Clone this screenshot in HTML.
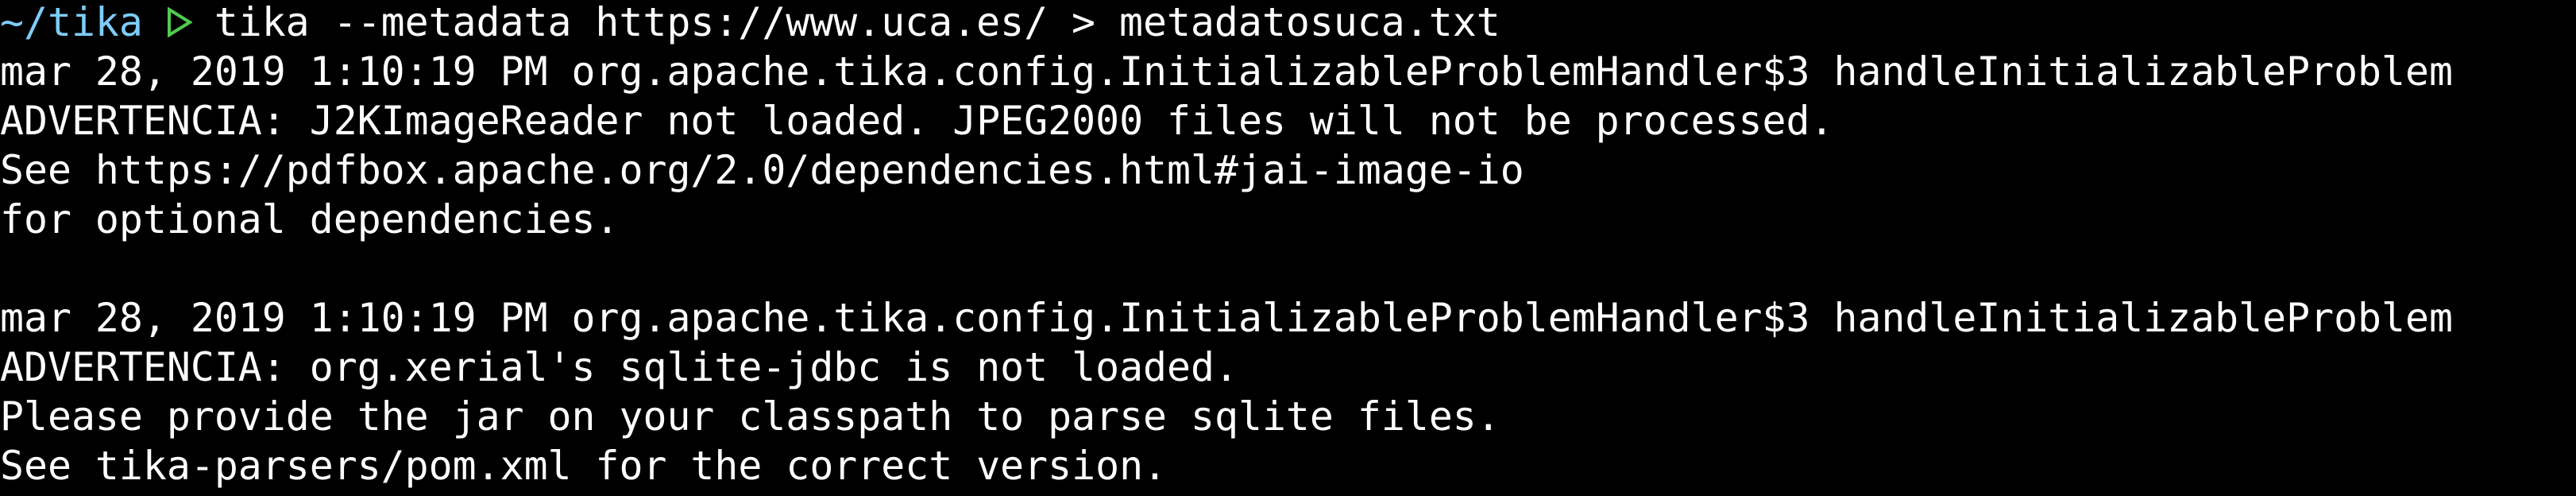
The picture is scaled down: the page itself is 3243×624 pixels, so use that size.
<!DOCTYPE html>
<html><head><meta charset="utf-8"><style>
html,body{margin:0;padding:0;background:#000;width:3243px;height:624px;overflow:hidden}
pre{margin:0;position:absolute;left:0;top:-3px;font-family:"DejaVu Sans Mono","Liberation Mono",monospace;font-size:49.8px;line-height:62px;color:#fff;white-space:pre}
.b{color:#7dcdf7}
.t{display:inline-block;width:29.9px;height:40px;position:relative}
.t svg{position:absolute;left:0;top:4px}
</style></head><body>
<pre><span class="b">~/tika</span> <span class="t"><svg width="32" height="38" viewBox="0 0 32 38"><path d="M3 3 L29 19 L3 35 Z" fill="none" stroke="#4fcb4f" stroke-width="4" stroke-linejoin="miter"/></svg></span> tika --metadata https://www.uca.es/ &gt; metadatosuca.txt
mar 28, 2019 1:10:19 PM org.apache.tika.config.InitializableProblemHandler$3 handleInitializableProblem
ADVERTENCIA: J2KImageReader not loaded. JPEG2000 files will not be processed.
See https://pdfbox.apache.org/2.0/dependencies.html#jai-image-io
for optional dependencies.

mar 28, 2019 1:10:19 PM org.apache.tika.config.InitializableProblemHandler$3 handleInitializableProblem
ADVERTENCIA: org.xerial's sqlite-jdbc is not loaded.
Please provide the jar on your classpath to parse sqlite files.
See tika-parsers/pom.xml for the correct version.</pre>
</body></html>
